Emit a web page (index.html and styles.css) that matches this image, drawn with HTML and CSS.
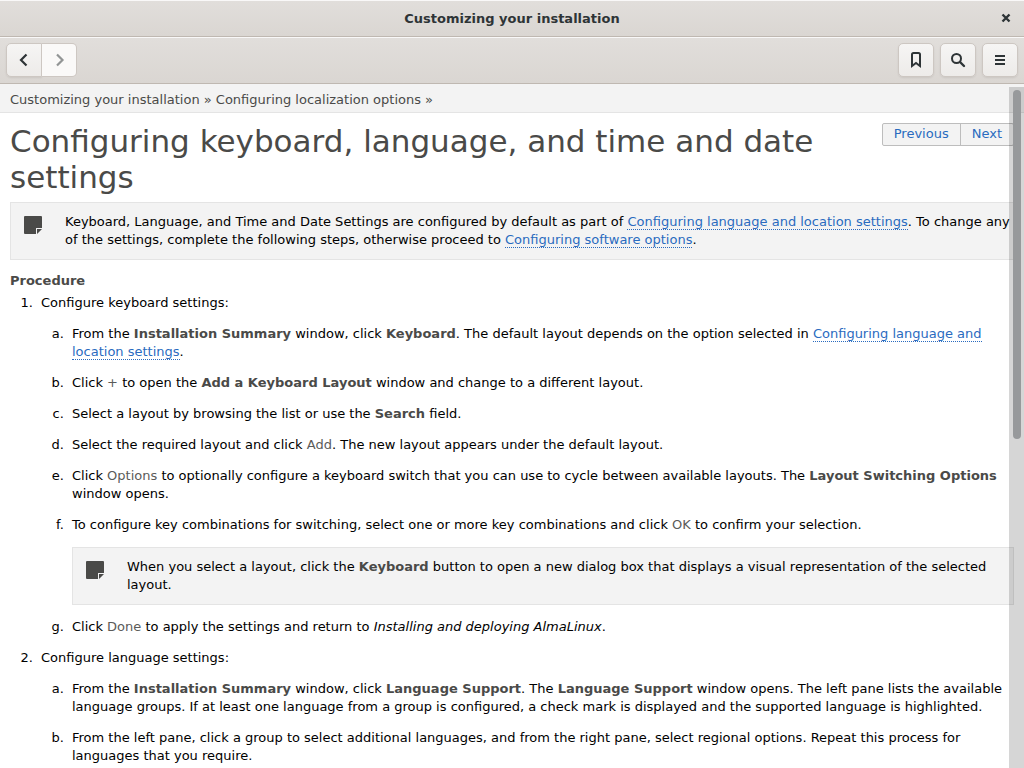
FILE: index.html
```html
<!DOCTYPE html>
<html lang="en">
<head>
<meta charset="utf-8">
<title>Customizing your installation</title>
<link rel="stylesheet" href="styles.css">
</head>
<body>
<header class="titlebar">
  <div class="window-title">Customizing your installation</div>
  <button class="close" aria-label="Close"><svg width="16" height="16" viewBox="0 0 16 16"><path d="M4.500 3.500l7 7M11.500 3.500l-7 7" fill="none" stroke="#2e3436" stroke-width="2.400"/></svg></button>
</header>
<nav class="toolbar" aria-label="Toolbar">
  <div class="history">
    <button class="tool tool-back" aria-label="Back"><svg width="16" height="16" viewBox="0 0 16 16"><path d="M10.500 2.500L5 8l5.500 5.500" fill="none" stroke="#2e3436" stroke-width="2.200"/></svg></button>
    <button class="tool tool-forward" aria-label="Forward" disabled><svg width="16" height="16" viewBox="0 0 16 16"><path d="M6 2.500L11.500 8L6 13.500" fill="none" stroke="#929595" stroke-width="2.200"/></svg></button>
  </div>
  <div class="actions">
    <button class="tool" aria-label="Bookmarks"><svg width="16" height="16" viewBox="0 0 16 16"><path d="M4 14V2.500Q4 1 5.500 1h5Q12 1 12 2.500V14L8 11z" fill="none" stroke="#2e3436" stroke-width="2"/></svg></button>
    <button class="tool" aria-label="Search"><svg width="16" height="16" viewBox="0 0 16 16"><circle cx="6.500" cy="6.500" r="4.500" fill="none" stroke="#2e3436" stroke-width="2"/><path d="M10 10l4 4" stroke="#2e3436" stroke-width="2.400" stroke-linecap="round"/></svg></button>
    <button class="tool" aria-label="Menu"><svg width="16" height="16" viewBox="0 0 16 16"><path d="M3 4h10M3 8h10M3 12h10" stroke="#2e3436" stroke-width="2"/></svg></button>
  </div>
</nav>
<div class="viewport">
  <nav class="breadcrumb" aria-label="Breadcrumb"><a href="#">Customizing your installation</a> » <a href="#">Configuring localization options</a> »</nav>
  <main class="page">
    <nav class="pager" aria-label="Pages"><a href="#">Previous</a><a href="#">Next</a></nav>
    <h1>Configuring keyboard, language, and time and date settings</h1>
    <aside class="note">
      <svg class="note-icon" width="18" height="18" viewBox="0 0 18 18"><path d="M1 0h16q1 0 1 1v11h-6v6H1q-1 0-1-1V1q0-1 1-1zM13 13h5l-5 5z" fill="#4a4a48"/></svg>
      <p>Keyboard, Language, and Time and Date Settings are configured by default as part of <a href="#">Configuring language and location settings</a>. To change any of the settings, complete the following steps, otherwise proceed to <a href="#">Configuring software options</a>.</p>
    </aside>
    <h2>Procedure</h2>
    <ol class="steps">
      <li>
        <p>Configure keyboard settings:</p>
        <ol class="substeps">
          <li><p>From the <b>Installation Summary</b> window, click <b>Keyboard</b>. The default layout depends on the option selected in <a href="#">Configuring language and location settings</a>.</p></li>
          <li><p>Click <span class="gui">+</span> to open the <b>Add a Keyboard Layout</b> window and change to a different layout.</p></li>
          <li><p>Select a layout by browsing the list or use the <b>Search</b> field.</p></li>
          <li><p>Select the required layout and click <span class="gui">Add</span>. The new layout appears under the default layout.</p></li>
          <li><p>Click <span class="gui">Options</span> to optionally configure a keyboard switch that you can use to cycle between available layouts. The <b>Layout Switching Options</b> window opens.</p></li>
          <li>
            <p>To configure key combinations for switching, select one or more key combinations and click <span class="gui">OK</span> to confirm your selection.</p>
            <aside class="note">
              <svg class="note-icon" width="18" height="18" viewBox="0 0 18 18"><path d="M1 0h16q1 0 1 1v11h-6v6H1q-1 0-1-1V1q0-1 1-1zM13 13h5l-5 5z" fill="#4a4a48"/></svg>
              <p>When you select a layout, click the <b>Keyboard</b> button to open a new dialog box that displays a visual representation of the selected layout.</p>
            </aside>
          </li>
          <li><p>Click <span class="gui">Done</span> to apply the settings and return to <em>Installing and deploying AlmaLinux</em>.</p></li>
        </ol>
      </li>
      <li>
        <p>Configure language settings:</p>
        <ol class="substeps">
          <li><p>From the <b>Installation Summary</b> window, click <b>Language Support</b>. The <b>Language Support</b> window opens. The left pane lists the available language groups. If at least one language from a group is configured, a check mark is displayed and the supported language is highlighted.</p></li>
          <li><p>From the left pane, click a group to select additional languages, and from the right pane, select regional options. Repeat this process for languages that you require.</p></li>
        </ol>
      </li>
    </ol>
  </main>
  <div class="scrollbar"><div class="thumb"></div></div>
</div>
</body>
</html>
```
FILE: styles.css
```css
* { box-sizing: border-box; }

body {
  margin: 0;
  height: 100vh;
  display: flex;
  flex-direction: column;
  overflow: hidden;
  background: #fff;
  color: #000;
  font: 13px/18px "DejaVu Sans", sans-serif;
}

h1, h2, p, ol { margin: 0; padding: 0; }

.titlebar,
.toolbar {
  flex: none;
  display: flex;
  align-items: center;
  border-top: 1px solid #f9f8f8;
  border-bottom: 1px solid #bfb8b1;
  background: linear-gradient(#e1dedb, #dad6d2);
}

.titlebar {
  display: grid;
  grid-template-columns: 1fr auto 1fr;
  height: 37px;
  padding: 0 10px;
}

.window-title {
  grid-column: 2;
  color: #2e3436;
  font-weight: bold;
}

.close {
  justify-self: end;
  display: flex;
  padding: 0;
  border: 0;
  background: none;
}

.toolbar {
  justify-content: space-between;
  height: 47px;
  padding: 0 6px 2px;
}

.history, .actions { display: flex; }
.actions { gap: 6px; }

.tool {
  display: flex;
  align-items: center;
  justify-content: center;
  width: 36px;
  height: 34px;
  padding: 0;
  border: 1px solid #cdc7c2;
  border-radius: 5px;
  background: linear-gradient(#f6f5f4, #edebe9);
  box-shadow: 0 1px 2px rgba(0, 0, 0, 0.08);
}

.tool-back { border-radius: 5px 0 0 5px; }

.tool-forward {
  width: 35px;
  border-left: 0;
  border-radius: 0 5px 5px 0;
  background: #faf9f8;
  box-shadow: none;
}

.viewport {
  position: relative;
  flex: 1;
  min-height: 0;
  overflow: hidden;
}

.breadcrumb {
  padding: 7px 10px 3px;
  border-bottom: 1px solid #e4e4e4;
  background: #f3f3f3;
  color: #4a4a48;
}

.breadcrumb a { color: inherit; text-decoration: none; }

.page { padding: 10px; }

a {
  color: #2a6bbf;
  text-decoration: none;
}

.page p a { border-bottom: 1px dotted #2a6bbf; }

.pager {
  float: right;
  display: flex;
  margin-left: 10px;
  border: 1px solid #bdbdbd;
  border-radius: 2px;
  background: #f3f3f3;
}

.pager a { padding: 1px 11px 2px; }
.pager a + a { border-left: 1px solid #bdbdbd; }

h1 {
  color: #4a4a48;
  font-size: 31px;
  font-weight: normal;
  line-height: 36px;
}

.note {
  display: flex;
  gap: 23px;
  margin-top: 7px;
  padding: 10px 2px 10px 13px;
  border: 1px solid #e4e4e4;
  background: #f3f3f3;
}

.note-icon { flex: none; margin-top: 3px; }

h2 {
  margin-top: 12px;
  color: #4a4a48;
  font-size: 13px;
  line-height: 18px;
}

.steps {
  margin-top: 4px;
  padding-left: 27px;
}

.substeps {
  padding-left: 27px;
  list-style: lower-alpha;
}

.steps li { padding-left: 4px; }

.substeps > li,
.steps > li + li,
.substeps .note { margin-top: 13px; }

b, .gui { color: #4a4a48; }
.gui { opacity: 0.9; }

.scrollbar {
  position: absolute;
  inset: 3px 0 0 auto;
  width: 15px;
  padding: 3px 3px 0 4px;
  background: rgba(0, 0, 0, 0.16);
}

.thumb {
  height: 51.5%;
  border-radius: 4px;
  background: #97999b;
}
```
